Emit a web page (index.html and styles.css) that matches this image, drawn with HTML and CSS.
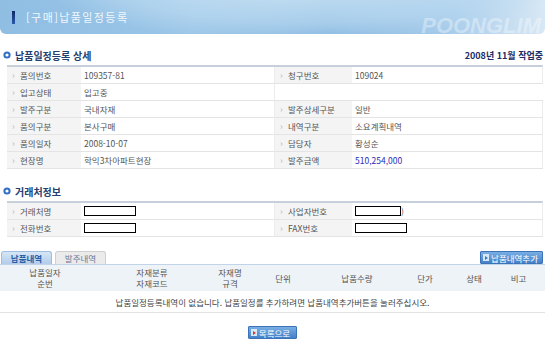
FILE: index.html
```html
<!DOCTYPE html>
<html lang="ko">
<head>
    <meta charset="UTF-8">
    <title>납품일정등록</title>
    <link rel="stylesheet" href="styles.css">
</head>
<body>
    <div class="page">
        <!-- Title banner -->
        <div class="banner">
            <span class="banner-bar"></span>
            <h1 class="banner-title">[구매]납품일정등록</h1>
            <span class="banner-logo">POONGLIM</span>
        </div>

        <div class="section-head">
            <h2 class="section-title">
                <svg class="dot" width="8" height="8" viewBox="0 0 8 8"><circle cx="4" cy="4" r="3.6" fill="#2f6ec4"/><circle cx="4" cy="4" r="1.6" fill="#fff"/></svg>
                납품일정등록 상세
            </h2>
            <span class="status">2008년 11월 작업중</span>
        </div>
        <div class="info">
            <div class="lbl">품의번호</div><div class="val">109357-81</div>
            <div class="lbl">청구번호</div><div class="val">109024</div>
            <div class="lbl">입고상태</div><div class="val">입고중</div>
            <div class="blank"></div>
            <div class="lbl">발주구분</div><div class="val">국내자재</div>
            <div class="lbl">발주상세구분</div><div class="val">일반</div>
            <div class="lbl">품의구분</div><div class="val">본사구매</div>
            <div class="lbl">내역구분</div><div class="val">소요계획내역</div>
            <div class="lbl">품의일자</div><div class="val">2008-10-07</div>
            <div class="lbl">담당자</div><div class="val">황성순</div>
            <div class="lbl">현장명</div><div class="val">학익3차아파트현장</div>
            <div class="lbl">발주금액</div><div class="val amount">510,254,000</div>
        </div>

        <div class="section-head second">
            <h2 class="section-title">
                <svg class="dot" width="8" height="8" viewBox="0 0 8 8"><circle cx="4" cy="4" r="3.6" fill="#2f6ec4"/><circle cx="4" cy="4" r="1.6" fill="#fff"/></svg>
                거래처정보
            </h2>
        </div>
        <div class="info">
            <div class="lbl">거래처명</div><div class="val"><span class="masked"></span></div>
            <div class="lbl">사업자번호</div><div class="val"><span class="masked short"></span>)</div>
            <div class="lbl">전화번호</div><div class="val"><span class="masked"></span></div>
            <div class="lbl">FAX번호</div><div class="val"><span class="masked"></span></div>
        </div>

        <div class="tab-bar">
            <div class="tabs">
                <span class="tab active">납품내역</span>
                <span class="tab">발주내역</span>
            </div>
            <button class="btn add-btn"><span class="btn-ico"></span>납품내역추가</button>
        </div>
        <div class="list-head">
            <div>납품일자<br>순번</div>
            <div>자재분류<br>자재코드</div>
            <div>자재명<br>규격</div>
            <div>단위</div>
            <div>납품수량</div>
            <div>단가</div>
            <div>상태</div>
            <div>비고</div>
        </div>
        <div class="empty-row">납품일정등록내역이 없습니다. 납품일정를 추가하려면 납품내역추가버튼을 눌러주십시오.</div>

        <div class="bottom">
            <button class="btn list-btn"><span class="btn-ico red"></span>목록으로</button>
        </div>
    </div>
</body>
</html>
```

FILE: styles.css
```css
body {
    margin: 0;
    padding: 0;
    background: #fff;
    font-family: "Noto Sans CJK KR", "Noto Sans", sans-serif;
    font-size: 8.5px;
    color: #555;
}
.page {
    width: 550px;
}

/* banner */
.banner {
    position: relative;
    overflow: hidden;
    width: 545px;
    height: 34px;
    display: flex;
    align-items: center;
    padding-left: 12px;
    box-sizing: border-box;
    border-radius: 0 0 6px 6px;
    background:
        radial-gradient(ellipse 260px 60px at 300px -18px, rgba(210, 232, 246, 0.9) 0%, rgba(190, 220, 242, 0.6) 70%, rgba(190, 220, 242, 0) 100%),
        linear-gradient(90deg, #90bee3 0%, #9ac5e7 35%, #82b4de 60%, #a6cbea 82%, #d8e8f5 100%);
}
.banner-bar {
    width: 3px;
    height: 13px;
    background: linear-gradient(#0e2a66, #2a5aa8);
    margin-right: 11px;
}
.banner-title {
    margin: 0;
    font-size: 11px;
    font-weight: normal;
    letter-spacing: 1.4px;
    color: #f2f7fc;
}
.banner-logo {
    position: absolute;
    right: 4px;
    bottom: -3px;
    font-family: "Liberation Sans", sans-serif;
    font-style: italic;
    font-weight: bold;
    font-size: 22px;
    line-height: 22px;
    color: rgba(255, 255, 255, 0.35);
}

/* section heads */
.section-head {
    display: flex;
    justify-content: space-between;
    align-items: center;
    height: 14px;
    margin-top: 14px;
    padding: 0 7px 0 3px;
}
.section-head.second {
    margin-top: 15px;
}
.section-title {
    margin: 0;
    display: flex;
    align-items: center;
    gap: 4px;
    font-size: 10px;
    font-weight: bold;
    color: #24406e;
}
.status {
    font-size: 9px;
    font-weight: bold;
    color: #1a2c66;
}

/* info tables */
.info {
    display: grid;
    grid-template-columns: 74px 194px 77px 191px;
    margin: 3px 7px 0 7px;
    border-top: 2px solid #c6d0da;
    border-right: 1px solid #e2e2e2;
}
.info > div {
    height: 17px;
    box-sizing: border-box;
    border-bottom: 1px solid #e4e4e4;
    display: flex;
    align-items: center;
}
.lbl {
    background: #f4f4f4;
    padding-left: 5px;
    color: #555;
}
.lbl::before {
    content: "›";
    color: #b5b5b5;
    width: 8px;
    font-size: 9px;
}
.val {
    padding-left: 3px;
    color: #555;
    border-right: 1px solid #ececec;
}
.blank {
    grid-column: span 2;
    background: #fff;
}
.amount {
    color: #2c2cb8;
}
.masked {
    display: inline-block;
    width: 50px;
    height: 8px;
    border: 1px solid #000;
    background: #fff;
}
.masked.short {
    width: 44px;
}

/* tabs + list */
.tab-bar {
    display: flex;
    justify-content: space-between;
    align-items: flex-end;
    height: 14px;
    margin-top: 13px;
    padding-right: 7px;
}
.tabs {
    display: flex;
    gap: 3px;
    padding-left: 1px;
}
.tab {
    width: 51px;
    height: 13px;
    box-sizing: border-box;
    text-align: center;
    line-height: 12px;
    border: 1px solid #cfcfcf;
    border-bottom: none;
    border-radius: 3px 3px 0 0;
    background: #ebebeb;
    color: #66789a;
}
.tab.active {
    background: linear-gradient(#d6e6f6, #b2cdea);
    border-color: #9fbde0;
    color: #2a5fa6;
    font-weight: bold;
}
.btn {
    display: flex;
    align-items: center;
    gap: 2px;
    height: 13px;
    padding: 0 4px 0 2px;
    border: 1px solid #3d72b8;
    border-radius: 1px;
    background: linear-gradient(#79aee4, #4481c8);
    color: #fff;
    font-family: inherit;
    font-size: 8.5px;
    cursor: pointer;
}
.btn-ico {
    width: 6px;
    height: 7px;
    background: #d9e8f7;
    position: relative;
}
.btn-ico::after {
    content: "";
    position: absolute;
    left: 2px;
    top: 1.5px;
    border-left: 3px solid #3b78c4;
    border-top: 2px solid transparent;
    border-bottom: 2px solid transparent;
}
.btn-ico.red::after {
    border-left-color: #d03a2a;
}
.list-head {
    display: grid;
    grid-template-columns: 90px 124px 32px 74px 74px 62px 36px 53px;
    width: 545px;
    height: 27px;
    box-sizing: border-box;
    border-top: 1px solid #c2d4ea;
    background: #eef3f8;
    color: #555;
}
.list-head > div {
    display: flex;
    align-items: center;
    justify-content: center;
    text-align: center;
    line-height: 11px;
}
.empty-row {
    width: 545px;
    height: 22px;
    box-sizing: border-box;
    border-bottom: 1px solid #e2e2e2;
    display: flex;
    align-items: center;
    justify-content: center;
    color: #444;
}
.bottom {
    display: flex;
    justify-content: center;
    width: 545px;
    margin-top: 13px;
}
.list-btn {
    padding: 0 6px 0 2px;
}
```
